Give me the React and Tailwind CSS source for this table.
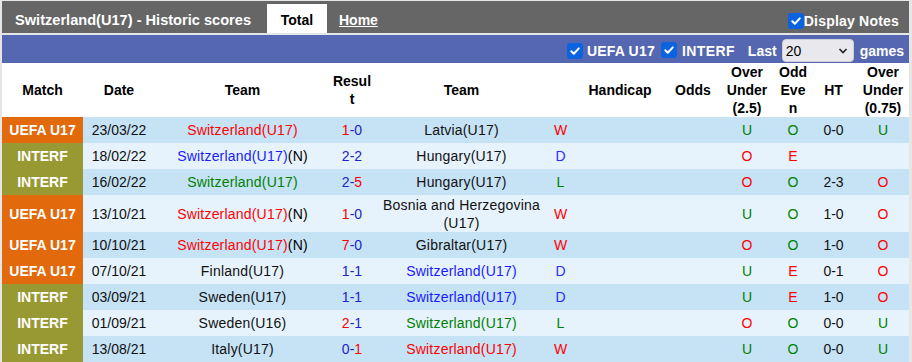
import React from "react";

const RED = "text-[#ff0000]";
const BLUE = "text-[#1a1aff]";
const SBLUE = "text-[#2222c8]";
const GREEN = "text-[#008000]";

function Check() {
  return (
    <span className="inline-flex items-center justify-center w-4 h-4 rounded-[3px] bg-[#0b63e0]">
      <svg width="12" height="12" viewBox="0 0 12 12">
        <path d="M2.3 6.2 L4.8 8.7 L9.8 3.4" fill="none" stroke="#fff" strokeWidth="2" strokeLinecap="round" strokeLinejoin="round" />
      </svg>
    </span>
  );
}

function Score({ h, a, win }) {
  return (
    <span className={SBLUE}>
      <span className={win === "h" ? RED : ""}>{h}</span>-
      <span className={win === "a" ? RED : ""}>{a}</span>
    </span>
  );
}

function Team({ name, color, n }) {
  return (
    <span>
      <span className={color}>{name}</span>
      {n ? <span className="text-black">(N)</span> : null}
    </span>
  );
}

const resColor = { W: RED, D: "text-[#2b2bff]", L: GREEN };
const ouColor = { U: GREEN, O: RED };
const oeColor = { O: GREEN, E: RED };

const rows = [
  { m: "U", d: "23/03/22", h: { name: "Switzerland(U17)", color: RED }, s: ["1", "0", "h"], a: { name: "Latvia(U17)" }, r: "W", ou: "U", oe: "O", ht: "0-0", ou2: "U" },
  { m: "I", d: "18/02/22", h: { name: "Switzerland(U17)", color: BLUE, n: true }, s: ["2", "2", null], a: { name: "Hungary(U17)" }, r: "D", ou: "O", oe: "E", ht: "", ou2: "" },
  { m: "I", d: "16/02/22", h: { name: "Switzerland(U17)", color: GREEN }, s: ["2", "5", "a"], a: { name: "Hungary(U17)" }, r: "L", ou: "O", oe: "O", ht: "2-3", ou2: "O" },
  { m: "U", d: "13/10/21", h: { name: "Switzerland(U17)", color: RED, n: true }, s: ["1", "0", "h"], a: { name: "Bosnia and Herzegovina (U17)" }, r: "W", ou: "U", oe: "O", ht: "1-0", ou2: "O", tall: true },
  { m: "U", d: "10/10/21", h: { name: "Switzerland(U17)", color: RED, n: true }, s: ["7", "0", "h"], a: { name: "Gibraltar(U17)" }, r: "W", ou: "O", oe: "O", ht: "1-0", ou2: "O" },
  { m: "U", d: "07/10/21", h: { name: "Finland(U17)" }, s: ["1", "1", null], a: { name: "Switzerland(U17)", color: BLUE }, r: "D", ou: "U", oe: "E", ht: "0-1", ou2: "O" },
  { m: "I", d: "03/09/21", h: { name: "Sweden(U17)" }, s: ["1", "1", null], a: { name: "Switzerland(U17)", color: BLUE }, r: "D", ou: "U", oe: "E", ht: "1-0", ou2: "O" },
  { m: "I", d: "01/09/21", h: { name: "Sweden(U16)" }, s: ["2", "1", "h"], a: { name: "Switzerland(U17)", color: GREEN }, r: "L", ou: "O", oe: "O", ht: "0-0", ou2: "U" },
  { m: "I", d: "13/08/21", h: { name: "Italy(U17)" }, s: ["0", "1", "a"], a: { name: "Switzerland(U17)", color: RED }, r: "W", ou: "U", oe: "O", ht: "0-0", ou2: "U" },
];

export default function App() {
  return (
    <div className="w-[912px] h-[362px] overflow-hidden bg-[#e6e6e6] pt-[1px] pl-[2px] pr-[3px] font-['Liberation_Sans',Arial,sans-serif] text-[14px]">
      {/* top gray bar */}
      <div className="h-[32px] bg-[#666666] flex items-stretch text-white font-bold">
        <div className="w-[265px] pl-[13px] flex items-center pt-[6px] text-[14.6px] leading-[18px]">
          Switzerland(U17) - Historic scores
        </div>
        <div className="mt-[3px] w-[60px] bg-white text-black flex items-center justify-center pt-[3px] leading-[18px]">
          Total
        </div>
        <div className="pl-[12px] flex items-center pt-[6px] leading-[18px] underline">Home</div>
        <div className="flex-1" />
        <div className="flex items-center pt-[7px] pr-[10px] leading-[18px]">
          <Check />
          <span className="tracking-[0.2px]">Display Notes</span>
        </div>
      </div>
      <div className="h-[2px]" />
      {/* blue bar */}
      <div className="h-[28px] bg-[#5467b0] flex items-center justify-end pt-[3px] pr-[5px] text-white font-bold leading-[18px]">
        <Check />
        <span className="ml-[4px] tracking-[0.2px]">UEFA U17</span>
        <span className="ml-[6px]"><Check /></span>
        <span className="ml-[5px] tracking-[0.4px]">INTERF</span>
        <span className="ml-[13px]">Last</span>
        <div className="ml-[5px] w-[72px] h-[23px] rounded-[4px] bg-[#e9e9ed] border border-[#d0d0d8] flex items-center justify-between pl-[3px] pr-[5px] text-black font-normal">
          <span>20</span>
          <svg width="10" height="8" viewBox="0 0 10 8">
            <path d="M1.5 2 L5 5.5 L8.5 2" fill="none" stroke="#222" strokeWidth="1.6" />
          </svg>
        </div>
        <span className="ml-[6px]">games</span>
      </div>
      {/* table */}
      <table className="table-fixed border-collapse w-[907px] leading-[18px] text-center">
        <colgroup>
          <col className="w-[81px]" />
          <col className="w-[72px]" />
          <col className="w-[175px]" />
          <col className="w-[44px]" />
          <col className="w-[175px]" />
          <col className="w-[23px]" />
          <col className="w-[96px]" />
          <col className="w-[50px]" />
          <col className="w-[58px]" />
          <col className="w-[34px]" />
          <col className="w-[47px]" />
          <col className="w-[52px]" />
        </colgroup>
        <thead>
          <tr className="h-[54px] bg-white font-bold text-black">
            <th className="p-0">Match</th>
            <th className="p-0">Date</th>
            <th className="p-0">Team</th>
            <th className="p-0">Resul<br />t</th>
            <th className="p-0">Team</th>
            <th className="p-0"></th>
            <th className="p-0">Handicap</th>
            <th className="p-0">Odds</th>
            <th className="p-0">Over<br />Under<br />(2.5)</th>
            <th className="p-0">Odd<br />Eve<br />n</th>
            <th className="p-0">HT</th>
            <th className="p-0">Over<br />Under<br />(0.75)</th>
          </tr>
        </thead>
        <tbody>
          {rows.map((r, i) => (
            <tr key={i} className={(r.tall ? "h-[37px] " : "h-[26px] ") + (i % 2 === 0 ? "bg-[#c6e2f5]" : "bg-[#e6f3fc]") + " text-[#111]"}>
              <td className={"p-0 font-bold text-white " + (r.m === "U" ? "bg-[#e2690c]" : "bg-[#999933]")}>
                {r.m === "U" ? "UEFA U17" : "INTERF"}
              </td>
              <td className="p-0">{r.d}</td>
              <td className="p-0 tracking-[0.2px]"><Team {...r.h} /></td>
              <td className="p-0"><Score h={r.s[0]} a={r.s[1]} win={r.s[2]} /></td>
              <td className="p-0 tracking-[0.2px]"><Team {...r.a} /></td>
              <td className={"p-0 " + resColor[r.r]}>{r.r}</td>
              <td className="p-0"></td>
              <td className="p-0"></td>
              <td className={"p-0 " + ouColor[r.ou]}>{r.ou}</td>
              <td className={"p-0 " + oeColor[r.oe]}>{r.oe}</td>
              <td className="p-0">{r.ht}</td>
              <td className={"p-0 " + (r.ou2 ? ouColor[r.ou2] : "")}>{r.ou2}</td>
            </tr>
          ))}
        </tbody>
      </table>
    </div>
  );
}
